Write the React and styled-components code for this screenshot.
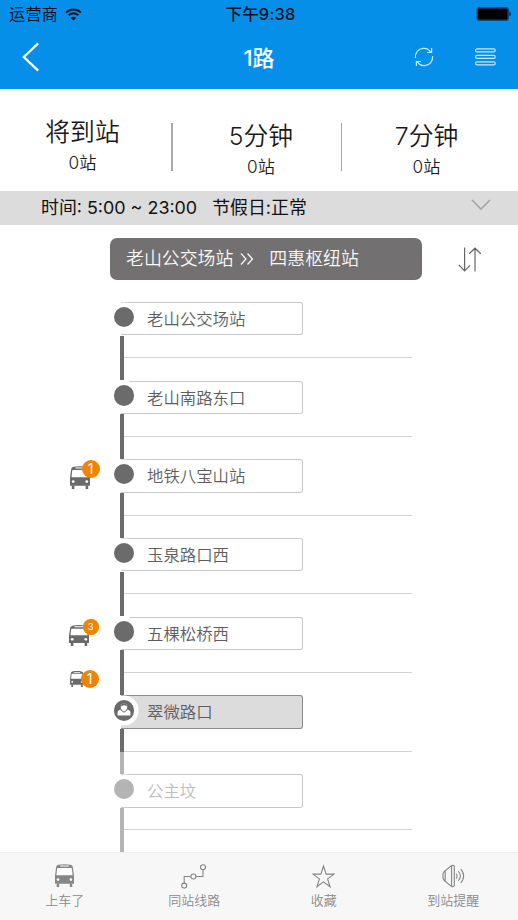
import React from 'react';
import styled, { createGlobalStyle } from 'styled-components';

const GlobalStyle = createGlobalStyle`
  * { box-sizing: border-box; }
  body {
    margin: 0;
    background: #fff;
    font-family: Inter, "Noto Sans CJK SC", sans-serif;
  }
`;

const Screen = styled.div`
  width: 518px;
  height: 920px;
  display: flex;
  flex-direction: column;
  overflow: hidden;
  background: #fff;
`;

const Header = styled.header`
  height: 88.5px;
  flex: none;
  background: #058fe9;
`;

const StatusBar = styled.div`
  height: 28px;
  display: grid;
  grid-template-columns: 1fr auto 1fr;
  align-items: center;
  padding: 0 6px 0 9px;
  font-size: 16px;
  line-height: 28px;
  color: #04111c;
`;

const Carrier = styled.div`
  display: flex;
  align-items: center;
  gap: 7px;
  letter-spacing: 0.4px;
`;

const Clock = styled.div`
  font-size: 16.4px;
  font-weight: 500;
  letter-spacing: 0.2px;
`;

const BatterySlot = styled.div`
  display: flex;
  justify-content: flex-end;
`;

const NavBar = styled.nav`
  height: 60px;
  display: grid;
  grid-template-columns: 1fr auto 1fr;
  align-items: center;
  padding: 0 22px;
`;

const Title = styled.h1`
  margin: 0;
  color: #fff;
  font-size: 22px;
  font-weight: 500;
  line-height: 60px;
`;

const NavActions = styled.div`
  display: flex;
  justify-content: flex-end;
  align-items: center;
  gap: 41.5px;
  padding-bottom: 3px;
`;

const ArrivalRow = styled.section`
  height: 102.5px;
  flex: none;
  display: flex;
  align-items: flex-start;
`;

const Arrival = styled.div`
  width: ${p => p.$width}px;
  padding-top: ${p => (p.$raised ? 24 : 28)}px;
  padding-left: ${p => p.$left || 0}px;
  padding-right: ${p => p.$right || 0}px;
  text-align: center;
  color: #1a1a1a;
`;

const ArrivalTime = styled.div`
  font-size: 24.8px;
  line-height: 38px;
  font-weight: 350;
  white-space: nowrap;
`;

const ArrivalStops = styled.div`
  font-size: 17.2px;
  line-height: 24px;
  font-weight: 350;
`;

const Separator = styled.div`
  width: 1.5px;
  height: 48px;
  margin-top: 34px;
  background: #a9a9a9;
`;

const Schedule = styled.div`
  height: 34px;
  flex: none;
  display: flex;
  align-items: center;
  padding: 0 27px 0 41px;
  background: #dcdcdc;
  color: #111;
  font-size: 17.9px;
  line-height: 34px;
  white-space: pre;
`;

const Holiday = styled.span`
  margin-left: 15px;
  flex: 1;
`;

const ChevronSlot = styled.div`
  display: flex;
  padding-bottom: 6px;
`;

const RouteRow = styled.div`
  height: 54.6px;
  flex: none;
  display: flex;
  align-items: center;
  padding: 14px 36px 0 110px;
  justify-content: space-between;
`;

const RoutePill = styled.div`
  width: 311.5px;
  height: 42px;
  display: flex;
  align-items: center;
  padding-left: 16px;
  border-radius: 7px;
  background: #727071;
  color: #f8f8f8;
  font-size: 17.9px;
  font-weight: 350;
  line-height: 42px;
`;

const RouteArrow = styled.svg`
  margin: 0 15px 0 7px;
`;

const SwapSlot = styled.div`
  display: flex;
`;

const StopList = styled.div`
  flex: 1;
  min-height: 0;
  overflow: hidden;
`;

const StopRow = styled.div`
  height: 78.7px;
  display: grid;
  grid-template-columns: 120px 4px 288px;
  position: relative;
`;

const BusSlot = styled.div`
  position: relative;
`;

const BusMark = styled.div`
  position: absolute;
  left: ${p => p.$x}px;
  top: ${p => p.$y}px;
  width: ${p => p.$w}px;
  height: ${p => p.$h}px;
  z-index: 2;
  svg { display: block; }
`;

const Badge = styled.span`
  position: absolute;
  left: ${p => p.$x}px;
  top: ${p => p.$y}px;
  width: ${p => p.$size}px;
  height: ${p => p.$size}px;
  border-radius: 50%;
  background: #f08300;
  color: #fff;
  text-align: center;
  font-size: ${p => p.$font}px;
  line-height: ${p => p.$size}px;
`;

const Rail = styled.div`
  display: flex;
  flex-direction: column;
  justify-content: space-between;
`;

const RailPart = styled.div`
  height: ${p => (p.$lower ? 22.7 : 22)}px;
  background: ${p => p.$color};
`;

const StopBody = styled.div`
  border-bottom: 1px solid #d2d2d2;
  padding-top: 22.3px;
`;

const StopName = styled.div`
  width: 182px;
  height: 33.5px;
  margin-left: -3px;
  padding-left: 26px;
  border: 1px solid ${p => (p.$active ? '#8c8c8c' : '#c9c9c9')};
  border-left: 0;
  border-radius: 0 3px 3px 0;
  background: ${p => (p.$active ? '#dcdcdc' : '#fff')};
  color: ${p => (p.$faded ? '#bdbdbd' : '#5e5e5e')};
  font-size: 16.4px;
  font-weight: 350;
  line-height: 32px;
`;

const Dot = styled.div`
  position: absolute;
  left: 113.5px;
  top: 27px;
  width: 20.5px;
  height: 20.5px;
  border-radius: 50%;
  box-shadow: 0 0 0 4.5px #fff;
  background: ${p => p.$color};
  display: flex;
  align-items: center;
  justify-content: center;
`;

const TabBar = styled.footer`
  height: 68px;
  flex: none;
  display: grid;
  grid-template-columns: repeat(4, 1fr);
  background: #f7f7f7;
  border-top: 1px solid #efefef;
  color: #8b8b8b;
`;

const Tab = styled.div`
  display: flex;
  flex-direction: column;
  align-items: center;
  padding-top: 11px;
  font-size: 13px;
  line-height: 20px;
  font-weight: 350;
  svg { display: block; }
`;

const TabIcon = styled.div`
  height: 26px;
`;

const WifiIcon = () => (
  <svg width="17" height="13" viewBox="0 0 17 13">
    <path d="M1 4.6C5.2.5 11.8.5 16 4.6M3.7 7.3c2.7-2.6 6.9-2.6 9.6 0" fill="none" stroke="#04111c" strokeWidth="2" />
    <path d="M8.5 12.6 5.8 9.9c1.5-1.5 3.9-1.5 5.4 0z" fill="#04111c" />
  </svg>
);

const BatteryIcon = () => (
  <svg width="36" height="14" viewBox="0 0 36 14">
    <rect x="1.2" y=".7" width="31" height="12.6" rx="2" fill="#000" stroke="#0a4a80" strokeWidth="1.4" />
    <path d="M33.4 4.6c2 .5 2 4.3 0 4.8z" fill="#062d50" />
  </svg>
);

const BackIcon = () => (
  <svg width="18" height="33" viewBox="0 0 18 33">
    <path d="M16.2 1.3 1.8 15l14.4 13.7" fill="none" stroke="#fff" strokeWidth="2.3" />
  </svg>
);

const RefreshIcon = () => (
  <svg width="20" height="20" viewBox="0 0 20 20" fill="none" stroke="#c9e9fb" strokeWidth="1.2">
    <path d="M1.4 11C.9 6 4.2 1.7 9.2 1.4c3.2-.2 5.900 1.200 7.500 3.700M17.600 1v4.500h-4.500M18.600 9c.5 5-2.800 9.300-7.800 9.600-3.200.2-5.900-1.200-7.500-3.700M2.400 19v-4.500h4.500" />
  </svg>
);

const MenuIcon = () => (
  <svg width="21" height="18" viewBox="0 0 21 18" fill="none" stroke="#c9e9fb" strokeWidth="1.2">
    <rect x=".6" y=".9" width="19.6" height="3" rx="1.5" />
    <rect x=".6" y="7.4" width="19.6" height="3" rx="1.5" />
    <rect x=".6" y="13.9" width="19.6" height="3" rx="1.5" />
  </svg>
);

const ChevronIcon = () => (
  <svg width="20" height="12" viewBox="0 0 20 12">
    <path d="m1 1 9 9 9-9" fill="none" stroke="#a5a5a5" strokeWidth="1.6" />
  </svg>
);

const SwapIcon = () => (
  <svg width="24" height="25" viewBox="0 0 24 25" fill="none" stroke="#666" strokeWidth="1.2">
    <path d="M6.6.5v23M.8 17.800l5.800 6 5.400-5.400M17 24.500v-23M11.200 6.800 17 1.200l5.800 5.600" />
  </svg>
);

const BusIcon = ({ width, height, color = '#6a6a6a' }) => (
  <svg width={width} height={height} viewBox="0 0 20 23" preserveAspectRatio="none">
    <path
      d="M3.500.8C7.500-.1 12.500-.1 16.500.8c1.600.4 2.200 1.500 2.400 3l1.100 8v8H0v-8l1.100-8c.2-1.500.8-2.600 2.400-3z"
      fill={color}
    />
    <path d="M5.500 1.400h9v1.200h-9zM3 4h14c.5 0 .7.200.8.600l.7 6.600h-17l.7-6.600c.1-.4.300-.6.800-.6z" fill="#fff" />
    <circle cx="3.200" cy="15.600" r="1.400" fill="#fff" />
    <circle cx="16.800" cy="15.600" r="1.400" fill="#fff" />
    <path d="M1.800 19.500h2.600V23H1.800zM15.600 19.500h2.600V23h-2.600z" fill={color} />
  </svg>
);

const PersonIcon = () => (
  <svg width="14" height="14" viewBox="0 0 15 15">
    <path d="M.6 13.500v-3C.6 8 3 7.200 5 6.700h5c2 .5 4.400 1.300 4.400 3.800v3z" fill="#fff" />
    <circle cx="7.500" cy="4" r="3.500" fill="#fff" />
    <path d="M4.200 3.400C5-.6 10-.6 10.800 3.400c-2-.4-2.500-1.300-3.600-1.300-.8 1-1.700 1.300-3 1.300zM4.600 7l2.900 2.300L10.400 7l1 .4-3.900 3-3.900-3z" fill="#6b6b6b" />
  </svg>
);

const LinesIcon = () => (
  <svg width="26" height="25" viewBox="0 0 26 25" fill="none" stroke="#858585" strokeWidth="1.1">
    <path d="M3.200 19.200v-6.700h6.500M15 12.500h7V5.800" />
    <circle cx="3.200" cy="21.600" r="2.500" />
    <circle cx="12.400" cy="12.500" r="2.500" />
    <circle cx="22" cy="3.200" r="2.500" />
  </svg>
);

const StarIcon = () => (
  <svg width="23" height="25" viewBox="0 0 23 25">
    <path d="m11.500 2 2.600 8.100h8l-6.500 4.800 2.500 7.900-6.600-4.900-6.600 4.900 2.500-7.900L.9 10.100h8z" fill="none" stroke="#858585" strokeWidth="1.1" />
  </svg>
);

const SpeakerIcon = () => (
  <svg width="24" height="25" viewBox="0 0 24 25" fill="none" stroke="#858585" strokeWidth="1.1">
    <path d="M4 7 10.400 1.700c.7-.6 2.900-.6 2.900.7v19.200c0 1.300-2.200 1.300-2.900.7L4 17C1.200 15.700 1.200 8.300 4 7zM10.600 1.900v20.200M4.200 7v10M15 9.600c1.500 1.200 1.500 3.700 0 4.900M17.300 7.400c2.800 2.400 2.800 6.900 0 9.300M19.600 5.200c4 3.500 4 10.100 0 13.700" />
  </svg>
);

const DARK = '#6b6b6b';
const LIGHT = '#b4b4b5';

const stops = [
  { name: '老山公交场站', upper: 'transparent', lower: DARK },
  { name: '老山南路东口', upper: DARK, lower: DARK },
  {
    name: '地铁八宝山站', upper: DARK, lower: DARK,
    bus: { x: 69.5, y: 28.8, w: 20, h: 23, count: 1, bx: 12, by: -5.5, size: 18, font: 14 },
  },
  { name: '玉泉路口西', upper: DARK, lower: DARK },
  {
    name: '五棵松桥西', upper: DARK, lower: DARK,
    bus: { x: 68.5, y: 31, w: 20, h: 21, count: 3, bx: 14.5, by: -6, size: 15.5, font: 9.5 },
  },
  {
    name: '翠微路口', upper: DARK, lower: DARK, active: true,
    bus: { x: 69.5, y: -2, w: 14, h: 16, count: 1, bx: 11, by: -1.3, size: 18, font: 14 },
  },
  { name: '公主坟', upper: LIGHT, lower: LIGHT, faded: true },
];

const Bus = ({ bus }) => (
  <BusMark $x={bus.x} $y={bus.y} $w={bus.w} $h={bus.h}>
    <BusIcon width={bus.w} height={bus.h} />
    <Badge $x={bus.bx} $y={bus.by} $size={bus.size} $font={bus.font}>{bus.count}</Badge>
  </BusMark>
);

const Stop = ({ stop }) => (
  <StopRow>
    <BusSlot>{stop.bus && <Bus bus={stop.bus} />}</BusSlot>
    <Rail>
      <RailPart $color={stop.upper} />
      <RailPart $color={stop.lower} $lower />
    </Rail>
    <StopBody>
      <StopName $active={stop.active} $faded={stop.faded}>{stop.name}</StopName>
    </StopBody>
    <Dot $color={stop.faded ? LIGHT : DARK}>{stop.active && <PersonIcon />}</Dot>
  </StopRow>
);

export default function App() {
  return (
    <Screen>
      <GlobalStyle />
      <Header>
        <StatusBar>
          <Carrier>运营商<WifiIcon /></Carrier>
          <Clock>下午9:38</Clock>
          <BatterySlot><BatteryIcon /></BatterySlot>
        </StatusBar>
        <NavBar>
          <BackIcon />
          <Title>1路</Title>
          <NavActions><RefreshIcon /><MenuIcon /></NavActions>
        </NavBar>
      </Header>
      <ArrivalRow>
        <Arrival $width={171} $right={6} $raised>
          <ArrivalTime>将到站</ArrivalTime>
          <ArrivalStops>0站</ArrivalStops>
        </Arrival>
        <Separator />
        <Arrival $width={168} $left={9}>
          <ArrivalTime>5分钟</ArrivalTime>
          <ArrivalStops>0站</ArrivalStops>
        </Arrival>
        <Separator />
        <Arrival $width={171} $right={2}>
          <ArrivalTime>7分钟</ArrivalTime>
          <ArrivalStops>0站</ArrivalStops>
        </Arrival>
      </ArrivalRow>
      <Schedule>
        <span>时间: 5:00 ~ 23:00</span>
        <Holiday>节假日:正常</Holiday>
        <ChevronSlot><ChevronIcon /></ChevronSlot>
      </Schedule>
      <RouteRow>
        <RoutePill>
          老山公交场站
          <RouteArrow width="14" height="14" viewBox="0 0 14 14" fill="none" stroke="#f8f8f8" strokeWidth="1.3">
            <path d="m1 1.500 5 5.500-5 5.500M7.500 1.500l5 5.500-5 5.500" />
          </RouteArrow>
          四惠枢纽站
        </RoutePill>
        <SwapSlot><SwapIcon /></SwapSlot>
      </RouteRow>
      <StopList>
        {stops.map(s => <Stop key={s.name} stop={s} />)}
        <StopRow>
          <BusSlot />
          <Rail><RailPart $color={LIGHT} /></Rail>
        </StopRow>
      </StopList>
      <TabBar>
        <Tab><TabIcon><BusIcon width={19} height={23} color="#868686" /></TabIcon>上车了</Tab>
        <Tab><TabIcon><LinesIcon /></TabIcon>同站线路</Tab>
        <Tab><TabIcon><StarIcon /></TabIcon>收藏</Tab>
        <Tab><TabIcon><SpeakerIcon /></TabIcon>到站提醒</Tab>
      </TabBar>
    </Screen>
  );
}
